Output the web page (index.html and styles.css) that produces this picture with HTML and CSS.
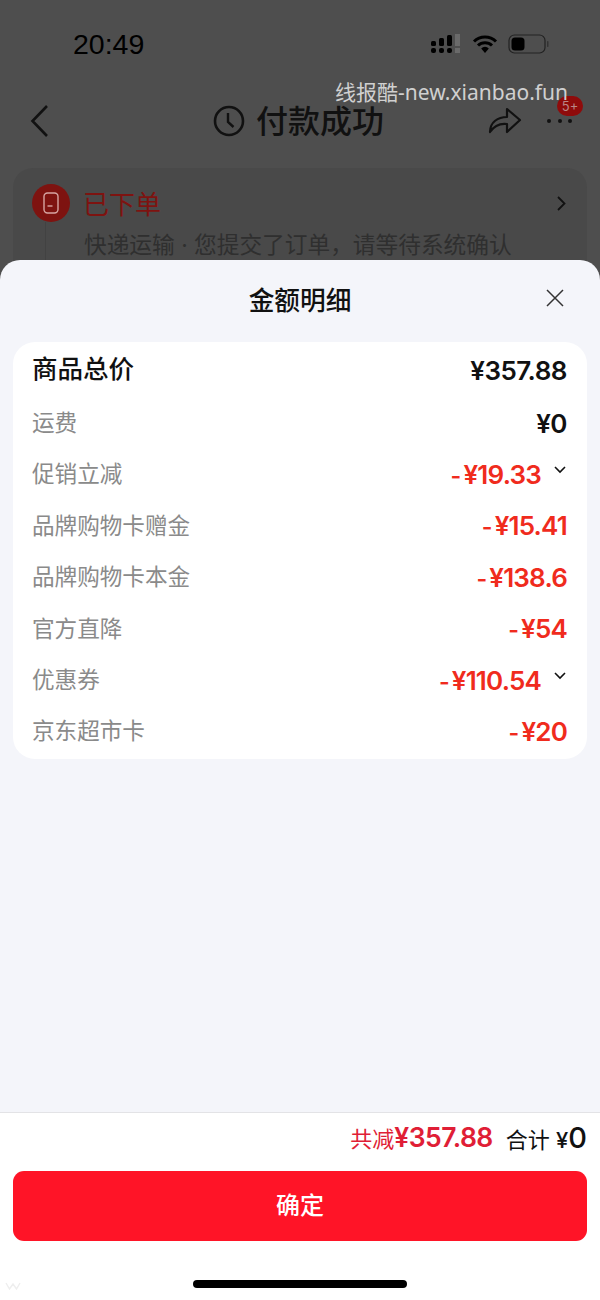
FILE: index.html
```html
<!DOCTYPE html>
<html lang="zh-CN">
<head>
    <meta charset="UTF-8">
    <meta name="viewport" content="width=device-width, initial-scale=1.0">
    <title>金额明细</title>
    <link rel="stylesheet" href="styles.css">
</head>
<body>
    <div class="screen">
        <!-- Dimmed order page behind the sheet -->
        <div class="backdrop">
            <div class="status-bar">
                <span class="time">20:49</span>
                <div class="status-icons">
                    <svg width="32" height="22" viewBox="0 0 32 22">
                        <g fill="#000">
                            <rect x="1" y="8" width="5" height="5" rx="1.5"/>
                            <rect x="1" y="15" width="5" height="5" rx="2"/>
                            <rect x="9" y="5" width="5" height="8" rx="1.5"/>
                            <rect x="9" y="15" width="5" height="5" rx="2"/>
                            <rect x="17" y="2" width="5" height="11" rx="1.5"/>
                            <rect x="17" y="15" width="5" height="5" rx="2"/>
                        </g>
                        <rect x="25" y="1" width="5" height="12" fill="#6a6a6a"/>
                        <rect x="25" y="15" width="5" height="5" fill="#6a6a6a"/>
                    </svg>
                    <svg width="26" height="20" viewBox="0 0 26 20">
                        <path d="M2 7.5a15.5 15.5 0 0 1 22 0M6 11.5a10 10 0 0 1 14 0" fill="none" stroke="#000" stroke-width="3"/>
                        <path d="M9.2 14.4a5.2 5.2 0 0 1 7.6 0L13 19z" fill="#000"/>
                    </svg>
                    <svg width="42" height="22" viewBox="0 0 42 22">
                        <rect x="1" y="2" width="36" height="18" rx="5.5" fill="none" stroke="#222" stroke-width="1.2"/>
                        <rect x="3.5" y="4.5" width="13" height="13" rx="3.5" fill="#000"/>
                        <rect x="39" y="8" width="1.5" height="6" rx="0.7" fill="#333"/>
                    </svg>
                </div>
            </div>
            <div class="nav-bar">
                <svg class="nav-back" width="20" height="34" viewBox="0 0 20 34">
                    <path d="M17 2 2.500 17 17 32" fill="none" stroke="#111" stroke-width="2.6"/>
                </svg>
                <div class="nav-title">
                    <svg width="32" height="32" viewBox="0 0 32 32">
                        <circle cx="16" cy="16" r="14" fill="none" stroke="#111" stroke-width="2.6"/>
                        <path d="M15 8v9l5.500 5" fill="none" stroke="#111" stroke-width="2.4"/>
                    </svg>
                    <span>付款成功</span>
                </div>
                <div class="nav-actions">
                    <svg class="share" width="34" height="30" viewBox="0 0 34 30">
                        <path d="M2 28C2 18 10 13 19 13V5l13 11-13 12v-8C11 19 6 22 2 28z" fill="none" stroke="#111" stroke-width="2.2" stroke-linejoin="round"/>
                    </svg>
                    <div class="more-dots"><i></i><i></i><i></i></div>
                </div>
                <span class="badge">5+</span>
            </div>
            <div class="order-card">
                <div class="order-status">
                    <span class="status-dot">
                        <svg width="16" height="22" viewBox="0 0 16 22">
                            <rect x="1" y="1" width="14" height="20" rx="3.500" fill="none" stroke="#d7a5a2" stroke-width="1.4"/>
                            <path d="M4.500 14h5" stroke="#d7a5a2" stroke-width="1.4"/>
                        </svg>
                    </span>
                    <span class="status-text">已下单</span>
                    <svg class="status-arrow" width="9" height="15" viewBox="0 0 9 15">
                        <path d="M1 1l6.500 6.500L1 14" fill="none" stroke="#111" stroke-width="1.8"/>
                    </svg>
                </div>
                <div class="order-note">快递运输 · 您提交了订单，请等待系统确认</div>
            </div>
            <span class="watermark">线报酷-new.xianbao.fun</span>
        </div>

        <div class="sheet">
            <div class="sheet-head">
                <h1>金额明细</h1>
                <svg class="sheet-close" width="18" height="18" viewBox="0 0 18 18">
                    <path d="M1 1l16 16M17 1 1 17" fill="none" stroke="#333" stroke-width="1.5"/>
                </svg>
            </div>

            <div class="price-card">
                <div class="price-row total">
                    <span class="label">商品总价</span>
                    <span class="amount">¥357.88</span>
                </div>
                <div class="price-row">
                    <span class="label">运费</span>
                    <span class="amount">¥0</span>
                </div>
                <div class="price-row minus">
                    <span class="label">促销立减</span>
                    <span class="amount"><i>-</i>¥19.33</span>
                    <svg class="row-arrow" width="12" height="8" viewBox="0 0 12 8"><path d="M1 1l5 5 5-5" fill="none" stroke="#111" stroke-width="1.6"/></svg>
                </div>
                <div class="price-row minus">
                    <span class="label">品牌购物卡赠金</span>
                    <span class="amount"><i>-</i>¥15.41</span>
                </div>
                <div class="price-row minus">
                    <span class="label">品牌购物卡本金</span>
                    <span class="amount"><i>-</i>¥138.6</span>
                </div>
                <div class="price-row minus">
                    <span class="label">官方直降</span>
                    <span class="amount"><i>-</i>¥54</span>
                </div>
                <div class="price-row minus">
                    <span class="label">优惠券</span>
                    <span class="amount"><i>-</i>¥110.54</span>
                    <svg class="row-arrow" width="12" height="8" viewBox="0 0 12 8"><path d="M1 1l5 5 5-5" fill="none" stroke="#111" stroke-width="1.6"/></svg>
                </div>
                <div class="price-row minus">
                    <span class="label">京东超市卡</span>
                    <span class="amount"><i>-</i>¥20</span>
                </div>
            </div>

            <div class="sheet-foot">
                <div class="summary">
                    <span class="saved">共减<b>¥357.88</b></span>
                    <span class="sum">合计 <small>¥</small><b>0</b></span>
                </div>
                <button class="confirm-btn">确定</button>
                <div class="home-bar"></div>
            </div>

            <svg class="corner-mark" width="16" height="8" viewBox="0 0 16 8">
                <path d="M1 1l3.500 6L8 2l3.500 5L15 1" fill="none" stroke="#eee" stroke-width="1.4"/>
            </svg>
        </div>
    </div>
</body>
</html>
```

FILE: styles.css
```css
* {
    margin: 0;
    padding: 0;
    box-sizing: border-box;
    font-family: Inter, "Noto Sans CJK SC", sans-serif;
}

body {
    background-color: #fff;
}

.screen {
    width: 600px;
    height: 1300px;
    display: flex;
    flex-direction: column;
    overflow: hidden;
}

/* dimmed page */
.backdrop {
    position: relative;
    height: 280px;
    margin-bottom: -20px;
    flex-shrink: 0;
    background-color: #4e4e4e;
    overflow: hidden;
}

.status-bar {
    height: 88px;
    padding: 0 50px 0 73px;
    display: flex;
    justify-content: space-between;
    align-items: center;
}

.time {
    font-family: "Liberation Sans", sans-serif;
    font-size: 28.5px;
    color: #000;
}

.status-icons {
    display: flex;
    align-items: center;
    gap: 10px;
}

.nav-bar {
    position: relative;
    height: 66px;
    padding: 0 28px 0 30px;
    display: flex;
    justify-content: space-between;
    align-items: center;
}

.nav-title {
    position: absolute;
    left: 213px;
    top: 8px;
    display: flex;
    align-items: center;
    gap: 11px;
    font-size: 32px;
    font-weight: 500;
    color: #111;
}

.nav-title span {
    padding-bottom: 4px;
}

.nav-actions {
    display: flex;
    align-items: center;
    gap: 25px;
}

.share {
    margin-bottom: 4px;
}

.more-dots {
    display: flex;
    gap: 6.5px;
}

.more-dots i {
    width: 4px;
    height: 4px;
    border-radius: 50%;
    background-color: #111;
}

.badge {
    position: absolute;
    right: 17px;
    top: 8px;
    width: 26px;
    height: 20px;
    border-radius: 10px;
    background-color: #8f0b0b;
    color: #b98686;
    font-size: 13px;
    line-height: 20px;
    text-align: center;
}

.watermark {
    position: absolute;
    left: 335px;
    top: 79px;
    font-family: "Noto Sans", "Noto Sans CJK SC", sans-serif;
    font-size: 21px;
    line-height: 26px;
    color: #d0d0d0;
}

.order-card {
    position: relative;
    margin: 14px 13px 0;
    height: 140px;
    padding: 16px 19px;
    border-radius: 20px;
    background-color: #494949;
}

/* timeline stub under the status dot */
.order-card::before {
    content: "";
    position: absolute;
    left: 32px;
    top: 54px;
    width: 1px;
    height: 60px;
    background-color: #424242;
}

.order-status {
    display: flex;
    align-items: center;
}

.status-dot {
    width: 38px;
    height: 38px;
    border-radius: 50%;
    background-color: #7e1310;
    display: flex;
    align-items: center;
    justify-content: center;
}

.status-text {
    margin-left: 13px;
    padding-top: 4px;
    flex: 1;
    font-size: 26px;
    line-height: 34px;
    color: #7e1310;
}

.status-arrow {
    margin-right: 2px;
}

.order-note {
    margin-left: 52px;
    margin-top: 6px;
    font-size: 22.7px;
    line-height: 34px;
    white-space: nowrap;
    color: #2f2f2f;
}

/* bottom sheet */
.sheet {
    position: relative;
    flex: 1;
    display: flex;
    flex-direction: column;
    border-radius: 20px 20px 0 0;
    background-color: #f4f5fa;
}

.sheet-head {
    position: relative;
    height: 82px;
    padding-bottom: 6px;
    display: flex;
    align-items: center;
    justify-content: center;
}

.sheet-head h1 {
    font-size: 25.7px;
    font-weight: 500;
    color: #111;
}

.sheet-close {
    position: absolute;
    right: 36px;
    top: 29px;
}

.price-card {
    margin: 0 13px;
    height: 417px;
    padding: 3px 20px 0 19px;
    border-radius: 22px;
    background-color: #fff;
}

.price-row {
    height: 51.4px;
    display: flex;
    align-items: center;
}

.price-row .label {
    flex: 1;
    padding-bottom: 1px;
    font-size: 22.6px;
    color: #8a8a8a;
}

.price-row .amount {
    padding-top: 2px;
    font-size: 26px;
    font-weight: 600;
    letter-spacing: -0.5px;
    color: #111;
}

.price-row .amount i {
    margin-right: 3px;
    font-size: 23px;
    font-style: normal;
}

.price-row.total .label {
    padding-bottom: 9px;
    font-size: 25.5px;
    font-weight: 500;
    color: #111;
}

.price-row.total .amount {
    padding-top: 0;
}

.price-row.minus .amount {
    letter-spacing: -0.8px;
    color: #f02b1d;
}

.row-arrow {
    margin: 0 1px 6px 13px;
}

.sheet-foot {
    margin-top: auto;
    height: 188px;
    padding: 0 13px;
    display: flex;
    flex-direction: column;
    background-color: #fff;
    border-top: 1px solid #e3e3e6;
}

.summary {
    height: 58px;
    padding-bottom: 10px;
    display: flex;
    justify-content: flex-end;
    align-items: center;
    gap: 13px;
}

.saved {
    font-size: 22px;
    color: #e01e36;
}

.saved b {
    font-size: 26.5px;
    font-weight: 600;
    letter-spacing: -0.5px;
}

.sum {
    font-size: 22px;
    color: #111;
}

.sum small {
    font-size: 22px;
    font-weight: 500;
}

.sum b {
    font-size: 29px;
    font-weight: 500;
}

.confirm-btn {
    height: 70px;
    padding-bottom: 5px;
    border: none;
    border-radius: 11px;
    background-color: #ff1427;
    color: #fff;
    font-size: 24px;
    font-weight: 500;
}

.home-bar {
    width: 214px;
    height: 8px;
    margin: 39px auto 0;
    border-radius: 4px;
    background-color: #000;
}

.corner-mark {
    position: absolute;
    left: 5px;
    bottom: 10px;
}
```
